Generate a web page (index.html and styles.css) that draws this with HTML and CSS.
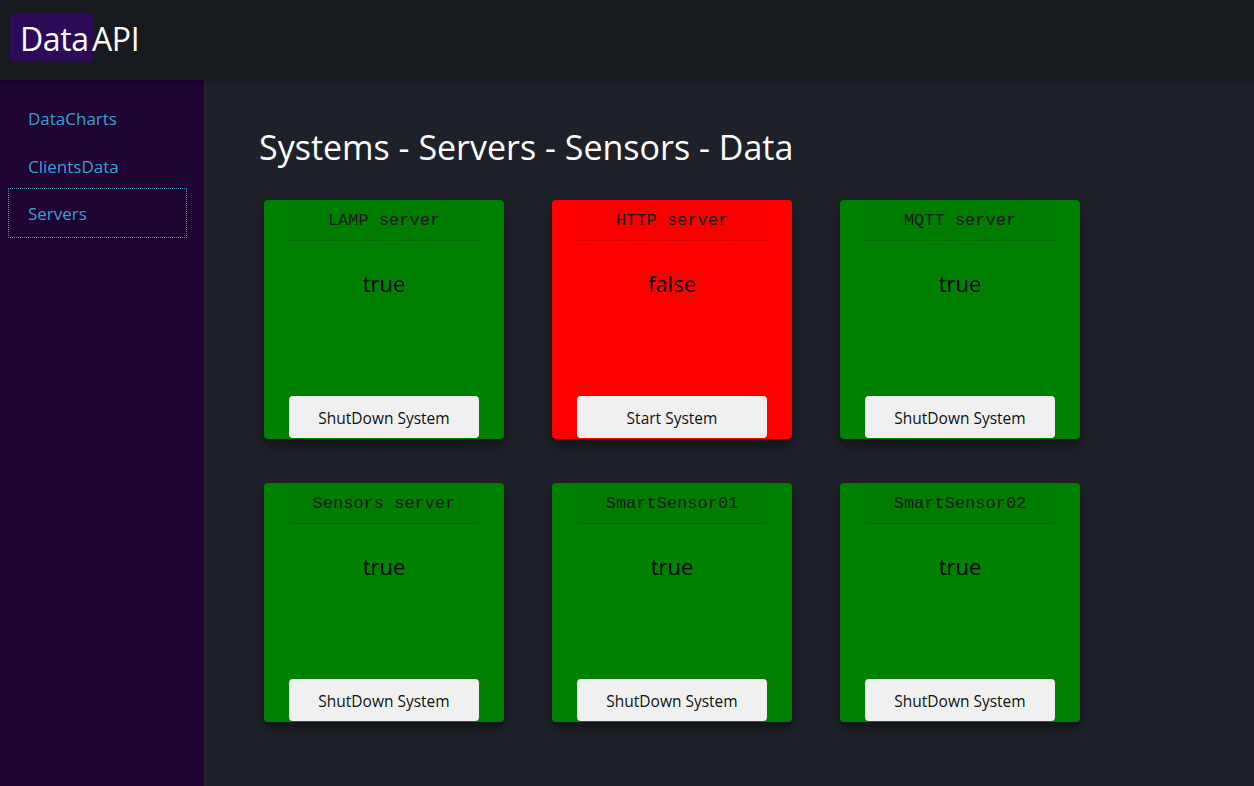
FILE: index.html
```html
<!DOCTYPE html>
<html>
<head>
<meta charset="utf-8">
<link rel="stylesheet" href="styles.css">
</head>
<body>
<header class="topbar">
  <div class="logo"><span class="logo-box">Data</span><span class="logo-rest">API</span></div>
</header>
<div class="layout">
  <nav class="sidebar">
    <a class="nav-item">DataCharts</a>
    <a class="nav-item">ClientsData</a>
    <a class="nav-item active">Servers</a>
  </nav>
  <main class="main">
    <h1 class="title">Systems - Servers - Sensors - Data</h1>
    <div class="grid">
      <div class="card on"><div class="card-head">LAMP server</div><div class="card-val">true</div><button class="btn">ShutDown System</button></div>
      <div class="card off"><div class="card-head">HTTP server</div><div class="card-val">false</div><button class="btn">Start System</button></div>
      <div class="card on"><div class="card-head">MQTT server</div><div class="card-val">true</div><button class="btn">ShutDown System</button></div>
      <div class="card on"><div class="card-head">Sensors server</div><div class="card-val">true</div><button class="btn">ShutDown System</button></div>
      <div class="card on"><div class="card-head">SmartSensor01</div><div class="card-val">true</div><button class="btn">ShutDown System</button></div>
      <div class="card on"><div class="card-head">SmartSensor02</div><div class="card-val">true</div><button class="btn">ShutDown System</button></div>
    </div>
  </main>
</div>
</body>
</html>
```

FILE: styles.css
```css
* { box-sizing: border-box; }
html, body { margin: 0; padding: 0; height: 100%; }
body {
  font-family: "Open Sans", "Noto Sans", sans-serif;
  background: #1e2129;
  overflow: hidden;
}
.topbar {
  height: 80px;
  background: #16191d;
  display: flex;
  align-items: center;
  padding-left: 10px;
  box-shadow: 0 1px 4px rgba(0,0,0,0.35);
  position: relative;
  z-index: 2;
}
.logo {
  display: flex;
  align-items: center;
  color: #fff;
  font-size: 32px;
  letter-spacing: -0.4px;
  margin-top: -4px;
}
.logo-box {
  background: #2c0a58;
  border-radius: 4px;
  height: 48px;
  width: 83px;
  padding-left: 10px;
  display: flex;
  align-items: center;
}
.logo-rest { margin-left: -1px; }
.layout {
  display: flex;
  height: 706px;
}
.sidebar {
  width: 206px;
  background: #1e0433;
  border-right: 2px solid #23262d;
  padding-top: 14px;
  display: flex;
  flex-direction: column;
  flex-shrink: 0;
}
.nav-item {
  display: flex;
  align-items: center;
  height: 48px;
  margin-left: 8px;
  width: 179px;
  padding-left: 19px;
  color: #3d9fd0;
  font-size: 17px;
  border: 1px solid transparent;
}
.nav-item.active {
  border: 1px dotted #3d8fb0;
  height: 50px;
  margin-top: -2px;
}
.main {
  flex: 1;
  padding-left: 53px;
  padding-top: 45px;
}
.title {
  margin: 0;
  color: #fff;
  font-weight: 400;
  font-size: 34px;
  line-height: 44px;
  letter-spacing: 0;
}
.grid {
  margin-top: 31px;
  margin-left: 5px;
  display: grid;
  grid-template-columns: repeat(3, 240px);
  column-gap: 48px;
  row-gap: 44px;
}
.card {
  height: 239px;
  border-radius: 4px;
  display: flex;
  flex-direction: column;
  align-items: center;
  padding-bottom: 1px;
  box-shadow: 0 6px 12px rgba(0,0,0,0.45);
}
.card.on { background: #008000; }
.card.off { background: #ff0000; }
.card-head {
  width: 190px;
  height: 40px;
  margin-top: 1px;
  background: rgba(0,0,0,0.03);
  border-bottom: 1px solid rgba(0,0,0,0.12);
  font-family: "Liberation Mono", monospace;
  font-size: 17px;
  color: #1a1a1a;
  display: flex;
  align-items: center;
  justify-content: center;
}
.card-val {
  margin-top: 27px;
  font-size: 22px;
  color: #000;
  flex: 1;
}
.btn {
  width: 190px;
  height: 42px;
  border: none;
  border-radius: 4px;
  background: #f0f0f0;
  font-family: "Open Sans", "Noto Sans", sans-serif;
  font-size: 15.5px;
  color: #111;
  padding-top: 2px;
}
```
